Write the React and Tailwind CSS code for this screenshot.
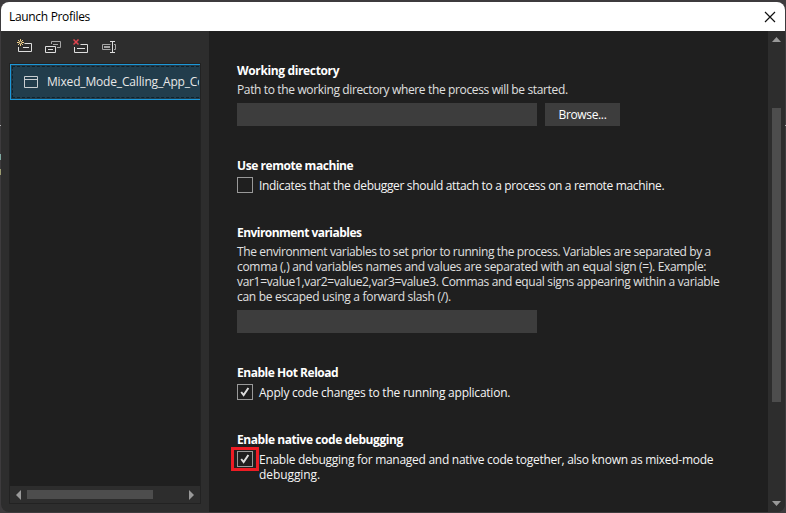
const Check = ({ on }) => (
  <span className="flex h-4 w-4 shrink-0 items-center justify-center border border-[#999999] bg-[#1f1f1f]">
    {on && (
      <svg width="10" height="10" viewBox="0 0 10 10" fill="none" stroke="#dcdcdc" strokeWidth="2">
        <path d="M1.2 5 L3.6 8 L8.4 1" />
      </svg>
    )}
  </span>
);

const Heading = ({ children, className = "" }) => (
  <h2 className={"h-4 whitespace-nowrap text-[12px] font-bold leading-4 text-white " + className}>{children}</h2>
);

const Line = ({ children, className = "" }) => (
  <span className={"block whitespace-nowrap leading-[15px] " + className}>{children}</span>
);

export default function App() {
  return (
    <div className="relative h-[513px] w-[786px] overflow-hidden bg-[#3d3b3d] px-px pb-px pt-0.5 font-['Open_Sans','Noto_Sans',sans-serif] text-[12px]">
      <span className="absolute left-0 top-[125px] h-px w-px bg-[#b0b0b0]" />
      <span className="absolute left-0 top-[154px] h-1.5 w-px bg-[#7fa8a0]" />
      <span className="absolute left-0 top-[169px] h-1.5 w-px bg-[#9a9a70]" />
      <span className="absolute right-0 top-[125px] h-px w-px bg-[#b0b0b0]" />
      <div className="flex h-[510px] w-[784px] flex-col overflow-hidden rounded-lg bg-[#2d2d2d]">
        <header className="flex h-[29px] shrink-0 items-center justify-between bg-white pl-2 pr-[9px] text-black">
          <span className="whitespace-nowrap tracking-[-0.32px]">Launch Profiles</span>
          <svg width="12" height="12" viewBox="0 0 12 12" fill="none" stroke="#111" strokeWidth="1.2">
            <path d="M1 1 L11 11 M11 1 L1 11" />
          </svg>
        </header>
        <div className="flex min-h-0 flex-1">
          <aside className="flex w-52 shrink-0 flex-col pl-2 pr-2">
            <div className="flex h-8 shrink-0 items-center gap-3 pl-2">
              <svg width="16" height="16" viewBox="0 0 16 16" fill="none">
                <path d="M7.5 4.5H14.5V12.5H1.5V8" stroke="#dedede" />
                <path d="M6 8.5H12" stroke="#dedede" />
                <path d="M3.5 0V7M0 3.5H7M1 1L6 6M6 1L1 6" stroke="#f0d08a" />
                <circle cx="3.5" cy="3.5" r="1" fill="#2d2d2d" />
              </svg>
              <svg width="16" height="16" viewBox="0 0 16 16" fill="none">
                <path d="M6.5 5V2.5H15.5V8.5H12" stroke="#a6a6a6" />
                <path d="M.5 7.5H10.5V13.5H.5ZM3 10.5H8" stroke="#dedede" />
                <path d="M8 5.5H13" stroke="#a6a6a6" />
              </svg>
              <svg width="16" height="16" viewBox="0 0 16 16" fill="none">
                <path d="M7.5 5.5H14.5V13.5H1.5V8M4 9.5H12" stroke="#dedede" />
                <path d="M.5 .5L5.5 5.5M5.5 .5L.5 5.5" stroke="#e0444f" strokeWidth="1.5" />
              </svg>
              <svg width="16" height="16" viewBox="0 0 16 16" fill="none">
                <path d="M9.5 5.5H1.5V10.5H9.5M13 5.5H14.5V10.5H13" stroke="#a6a6a6" />
                <path d="M3 8H9" stroke="#a6a6a6" strokeWidth="2" />
                <path d="M11.5 2V14M9 2.5H11M12 2.5H14M9 13.5H11M12 13.5H14" stroke="#dedede" />
              </svg>
            </div>
            <div className="flex h-[441px] w-48 shrink-0 flex-col border border-[#222222] bg-[#1f1f1f]">
              <div className="h-9 overflow-hidden border border-r-0 border-[#1c97d8] bg-[#223d4c] p-px">
                <div className="flex h-8 items-center gap-2 overflow-hidden border border-r-0 border-dashed border-[#10212b] pl-[10px]">
                  <svg className="shrink-0" width="16" height="16" viewBox="0 0 16 16" fill="none" stroke="#c9ced1">
                    <path d="M1.5 2.5H14.5V13.5H1.5ZM1.5 5.5H14.5" />
                  </svg>
                  <span className="whitespace-nowrap tracking-[-0.17px] text-[#e8e8e8]">Mixed_Mode_Calling_App_Core</span>
                </div>
              </div>
              <div className="mt-auto flex h-[17px] items-center bg-[#2d2d2d]">
                <svg className="ml-1.5" width="5" height="10" viewBox="0 0 5 10"><path d="M5 0V10L0 5Z" fill="#999" /></svg>
                <div className="ml-1.5 h-[9px] w-[126px] bg-[#4d4d4d]" />
                <svg className="ml-9" width="5" height="10" viewBox="0 0 5 10"><path d="M0 0V10L5 5Z" fill="#999" /></svg>
              </div>
            </div>
          </aside>
          <main className="min-w-0 flex-1 bg-[#1f1f1f] pl-7 pt-8">
            <section className="h-[95px]">
              <Heading className="tracking-[-0.36px]">Working directory</Heading>
              <div className="pt-[3px] text-[#e0e0e0]">
                <Line className="tracking-[-0.36px]">Path to the working directory where the process will be started.</Line>
              </div>
              <div className="mt-1.5 flex gap-2">
                <div className="h-[23px] w-[300px] bg-[#3d3d3d]" />
                <div className="flex h-[23px] w-[75px] items-center justify-center bg-[#3d3d3d] tracking-[-0.35px] text-white">Browse...</div>
              </div>
            </section>
            <section className="h-[67px]">
              <Heading className="tracking-[-0.44px]">Use remote machine</Heading>
              <div className="mt-[3px] flex items-start gap-1.5 text-[#f5f5f5]">
                <Check />
                <div className="pt-px">
                  <Line className="tracking-[-0.33px]">Indicates that the debugger should attach to a process on a remote machine.</Line>
                </div>
              </div>
            </section>
            <section className="h-[140px]">
              <Heading className="tracking-[-0.54px]">Environment variables</Heading>
              <div className="pt-[3px] text-[#e0e0e0]">
                <Line className="tracking-[-0.38px]">The environment variables to set prior to running the process. Variables are separated by a</Line>
                <Line className="tracking-[-0.31px]">comma (,) and variables names and values are separated with an equal sign (=). Example:</Line>
                <Line className="tracking-[-0.32px]">var1=value1,var2=value2,var3=value3. Commas and equal signs appearing within a variable</Line>
                <Line className="tracking-[-0.3px]">can be escaped using a forward slash (/).</Line>
              </div>
              <div className="mt-1.5 h-[23px] w-[300px] bg-[#3d3d3d]" />
            </section>
            <section className="h-[67px]">
              <Heading className="tracking-[-0.47px]">Enable Hot Reload</Heading>
              <div className="mt-[3px] flex items-start gap-1.5 text-[#f5f5f5]">
                <Check on />
                <div className="pt-px">
                  <Line className="tracking-[-0.23px]">Apply code changes to the running application.</Line>
                </div>
              </div>
            </section>
            <section>
              <Heading className="tracking-[-0.43px]">Enable native code debugging</Heading>
              <div className="mt-[3px] flex items-start gap-1.5 text-[#f5f5f5]">
                <span className="relative">
                  <Check on />
                  <span className="absolute -left-1.5 -top-1 h-6 w-7 border-[3px] border-[#ed1c24]" />
                </span>
                <div className="pt-px">
                  <Line className="tracking-[-0.28px]">Enable debugging for managed and native code together, also known as mixed-mode</Line>
                  <Line className="tracking-[-0.08px]">debugging.</Line>
                </div>
              </div>
            </section>
          </main>
          <div className="flex w-[17px] shrink-0 flex-col items-center bg-[#2d2d2d]">
            <svg className="mt-1.5" width="9" height="5" viewBox="0 0 9 5"><path d="M0 5H9L4.5 0Z" fill="#999" /></svg>
            <div className="mt-[66px] h-[294px] w-[9px] bg-[#4d4d4d]" />
            <svg className="mb-1.5 mt-auto" width="9" height="5" viewBox="0 0 9 5"><path d="M0 0H9L4.5 5Z" fill="#999" /></svg>
          </div>
        </div>
      </div>
    </div>
  );
}
